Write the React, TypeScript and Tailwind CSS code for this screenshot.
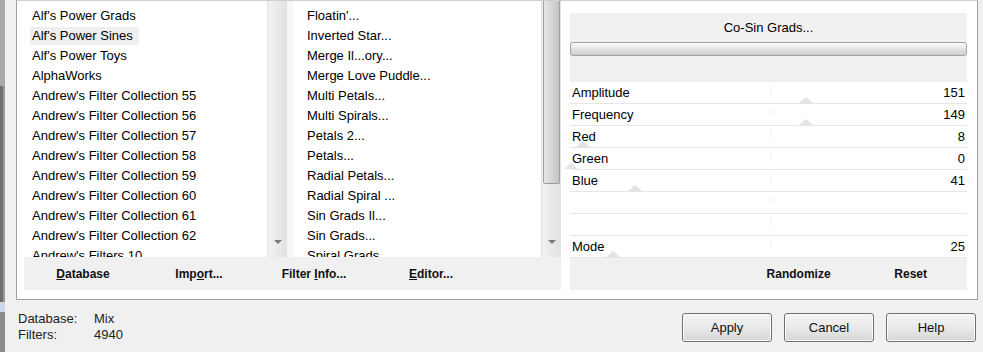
import type { ReactNode } from "react";

const leftItems = [
  "Alf's Power Grads",
  "Alf's Power Sines",
  "Alf's Power Toys",
  "AlphaWorks",
  "Andrew's Filter Collection 55",
  "Andrew's Filter Collection 56",
  "Andrew's Filter Collection 57",
  "Andrew's Filter Collection 58",
  "Andrew's Filter Collection 59",
  "Andrew's Filter Collection 60",
  "Andrew's Filter Collection 61",
  "Andrew's Filter Collection 62",
  "Andrew's Filters 10",
];

const filterItems = [
  "Floatin'...",
  "Inverted Star...",
  "Merge Il...ory...",
  "Merge Love Puddle...",
  "Multi Petals...",
  "Multi Spirals...",
  "Petals 2...",
  "Petals...",
  "Radial Petals...",
  "Radial Spiral ...",
  "Sin Grads Il...",
  "Sin Grads...",
  "Spiral Grads...",
];

// thumb = x offset of the faint slider marker inside the row (null = none)
const params: { label: string; value: string; thumb: number | null }[] = [
  { label: "Amplitude", value: "151", thumb: 229 },
  { label: "Frequency", value: "149", thumb: 229 },
  { label: "Red", value: "8", thumb: 6 },
  { label: "Green", value: "0", thumb: -6 },
  { label: "Blue", value: "41", thumb: 58 },
  { label: "", value: "", thumb: null },
  { label: "", value: "", thumb: null },
  { label: "Mode", value: "25", thumb: 36 },
];

/* ─── Scrollbar ─── */
function ScrollBar({ thumb = 0 }: { thumb?: number }) {
  return (
    <div className="w-[20px] h-full flex flex-col bg-gradient-to-r from-[#f3f3f3] via-[#e9e9e9] to-[#e2e2e2] border-l border-[#e0e0e0]">
      {thumb > 0 ? (
        <div
          className="mx-[1px] rounded-b-[2px] border border-[#9e9e9e] border-t-0 bg-gradient-to-r from-[#e6e6e6] via-[#d6d6d6] to-[#c4c4c4]"
          style={{ height: thumb }}
        />
      ) : null}
      <div className="flex-1" />
      <div className="h-[28px] flex items-start justify-center pt-[11px]">
        <div className="w-0 h-0 border-l-[4px] border-r-[4px] border-t-[4px] border-l-transparent border-r-transparent border-t-[#7a7a7a]" />
      </div>
    </div>
  );
}

/* ─── ToolLink (bold bar buttons) ─── */
function ToolLink({ children, className = "" }: { children: ReactNode; className?: string }) {
  return (
    <div className={`flex justify-center whitespace-nowrap text-[12px] font-bold text-[#111] ${className}`}>
      <span>{children}</span>
    </div>
  );
}

/* ─── Dialog button ─── */
function DlgButton({ children }: { children: ReactNode }) {
  return (
    <button className="w-[90px] h-[29px] rounded-[3px] border border-[#707070] bg-gradient-to-b from-[#f4f4f4] via-[#e9e9e9] to-[#d6d6d6] text-[13px] text-[#111] shadow-[inset_0_0_0_1px_#fbfbfb]">
      {children}
    </button>
  );
}

export default function App() {
  return (
    <div
      className="w-[983px] h-[352px] overflow-hidden flex bg-[#f0f0f0] text-black"
      style={{ fontFamily: '"Liberation Sans", Arial, sans-serif' }}
    >
      {/* window edge strip */}
      <div className="w-[5px] h-full flex flex-col">
        <div className="h-[86px] bg-[#a9a9a9]" />
        <div className="h-[216px] bg-[#6f6f6f] border-r-2 border-[#9a9a9a]" />
        <div className="h-[10px] bg-[#c9d8ea]" />
        <div className="flex-1 bg-[#8c8c8c]" />
      </div>

      <div className="flex-1 flex flex-col">
        {/* main group frame */}
        <div className="ml-[11px] w-[962px] h-[300px] bg-white border-l border-r border-b border-[#a0a0a0] border-t border-t-[#cfcfcf] flex pl-[7px] pr-[8px]">
          {/* left: lists + tool bar */}
          <div className="w-[537px] flex flex-col">
            <div className="h-[256px] flex">
              <div className="w-[243px] h-full overflow-hidden pt-[5px] pl-[6px] text-[13px]">
                {leftItems.map((it) => (
                  <div key={it} className="h-[20px] flex items-center whitespace-nowrap">
                    <span
                      className={
                        it === "Alf's Power Sines"
                          ? "bg-[#efefef] pl-[2px] pr-[6px] h-[18px] flex items-center"
                          : "pl-[2px]"
                      }
                    >
                      {it}
                    </span>
                  </div>
                ))}
              </div>
              <ScrollBar />
              <div className="w-[6px] bg-[#f6f6f6]" />
              <div className="w-[248px] h-full overflow-hidden pt-[5px] pl-[14px] text-[13px]">
                {filterItems.map((it) => (
                  <div key={it} className="h-[20px] flex items-center whitespace-nowrap">
                    {it}
                  </div>
                ))}
              </div>
              <ScrollBar thumb={183} />
            </div>
            <div className="h-[33px] bg-[#f0f0f0] flex items-center">
              <ToolLink className="w-[118px]">
                <u>D</u>atabase
              </ToolLink>
              <ToolLink className="w-[114px]">
                Imp<u>o</u>rt...
              </ToolLink>
              <ToolLink className="w-[116px]">
                Filter <u>I</u>nfo...
              </ToolLink>
              <ToolLink className="w-[118px]">
                <u>E</u>ditor...
              </ToolLink>
            </div>
          </div>

          <div className="w-[9px]" />

          {/* right: parameter panel */}
          <div className="w-[397px] flex flex-col pt-[12px]">
            <div className="h-[69px] bg-[#f0f0f0] flex flex-col">
              <div className="h-[29px] flex items-center justify-center text-[13px] pt-[1px]">
                Co-Sin Grads...
              </div>
              <div className="h-[14px] rounded-[3px] border border-[#a3a3a3] bg-gradient-to-b from-[#fbfbfb] via-[#e4e4e4] to-[#cdcdcd]" />
            </div>
            {params.map((p, i) => (
              <div
                key={i}
                className="relative h-[22px] flex items-center justify-between px-[2px] text-[13px] border-b border-[#e6e6e6]"
              >
                {p.thumb !== null ? (
                  <div
                    className="absolute bottom-0 w-0 h-0 border-l-[7px] border-r-[7px] border-b-[6px] border-l-transparent border-r-transparent border-b-[#e4e4e4]"
                    style={{ left: p.thumb }}
                  />
                ) : null}
                <div className="absolute left-[200px] top-[4px] w-px h-[8px] bg-[#f0f0f0]" />
                <span className="relative">{p.label}</span>
                <span className="relative">{p.value}</span>
              </div>
            ))}
            <div className="h-[32px] bg-[#f0f0f0] flex items-center">
              <div className="w-[175px]" />
              <ToolLink className="w-[113px]">Randomize</ToolLink>
              <ToolLink className="w-[114px]">Reset</ToolLink>
            </div>
          </div>
        </div>

        {/* status + dialog buttons */}
        <div className="flex-1 flex pl-[13px] pr-[7px]">
          <div className="pt-[11px] text-[13px] leading-[16px] text-[#222]">
            <div className="flex">
              <span className="w-[76px]">Database:</span>
              <span>Mix</span>
            </div>
            <div className="flex">
              <span className="w-[76px]">Filters:</span>
              <span>4940</span>
            </div>
          </div>
          <div className="flex-1" />
          <div className="pt-[13px] flex gap-[12px]">
            <DlgButton>Apply</DlgButton>
            <DlgButton>Cancel</DlgButton>
            <DlgButton>Help</DlgButton>
          </div>
        </div>
      </div>
    </div>
  );
}
